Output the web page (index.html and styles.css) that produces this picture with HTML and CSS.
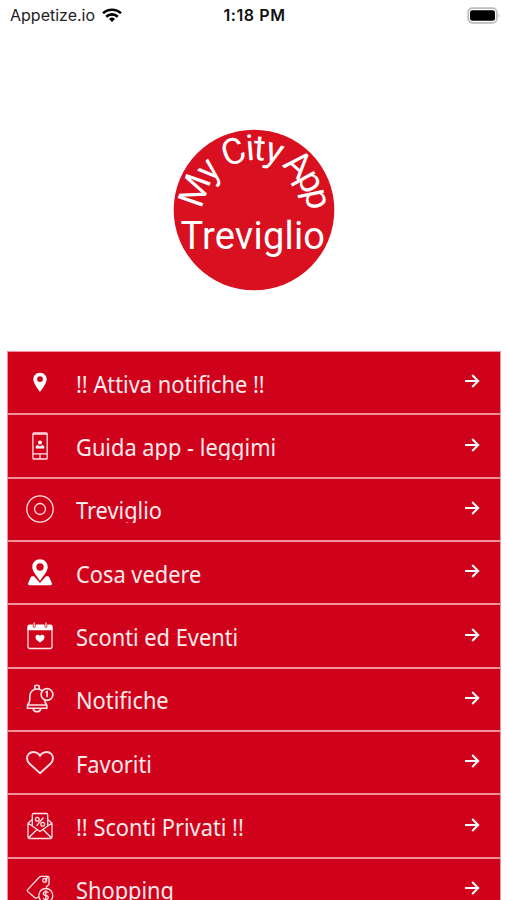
FILE: index.html
```html
<!DOCTYPE html>
<html lang="it">
<head>
    <meta charset="UTF-8">
    <meta name="viewport" content="width=device-width, initial-scale=1.0">
    <title>My City App Treviglio</title>
    <link rel="stylesheet" href="styles.css">
</head>
<body>
    <header class="status-bar">
        <div class="carrier">
            <span>Appetize.io</span>
            <svg width="20" height="15" viewBox="0 0 20 15" fill="none" stroke="#000" stroke-width="2.6">
                <path d="M1 5.3a13 13 0 0 1 18 0"/>
                <path d="M4.2 8.7a8.3 8.3 0 0 1 11.6 0"/>
                <path d="M7 11a4.3 4.3 0 0 1 6 0L10 14z" fill="#000" stroke="none"/>
            </svg>
        </div>
        <div class="time">1:18 PM</div>
        <svg class="battery" width="34" height="17" viewBox="0 0 34 17">
            <rect x="1.2" y="1.2" width="28.6" height="14.6" rx="4.2" fill="#fff" stroke="#bcbcbc" stroke-width="1.7"/>
            <rect x="3" y="3.2" width="25" height="10.6" rx="2.4"/>
            <path d="M31.6 6.4q1.8 2.1 0 4.2z" fill="#aaa"/>
        </svg>
    </header>

    <div class="logo">
        <svg width="162" height="162" viewBox="0 0 162 162">
            <defs>
                <path id="arc" d="M33.500 100.600A52 52 0 1 1 131.300 100.600"/>
            </defs>
            <circle cx="81" cy="81" r="80.3" fill="#d81020"/>
            <text class="logo-arc" x="20 47.3 62 69.3 90.6 97.2 107 123 125.8 144.7 160"><textPath href="#arc">My City App</textPath></text>
            <text class="logo-text" x="7.5" y="120" textLength="144.5">Treviglio</text>
        </svg>
    </div>

    <nav class="menu">
        <a class="row">
            <svg class="icon" viewBox="0 0 32 32">
                <path class="solid" fill-rule="evenodd" d="M16 6.700c-3.700 0-6.700 2.900-6.700 6.500 0 4.500 6.700 12.500 6.700 12.500s6.700-8 6.700-12.500c0-3.600-3-6.500-6.700-6.500zm0 3.500a2.900 2.900 0 1 1 0 5.800 2.900 2.900 0 0 1 0-5.800z"/>
            </svg>
            <span class="label">!! Attiva notifiche !!</span>
        </a>
        <a class="row">
            <svg class="icon" viewBox="0 0 32 32">
                <rect x="8.900" y="3" width="14.300" height="26" rx="1"/>
                <path d="M9 4.200h14M9 23.800h14M16 24v5" />
                <circle class="solid" cx="16" cy="12.500" r="2"/>
                <path class="solid" d="M11.700 18.600v-1.500q0-1.700 2.200-2l2.100 1.400 2.100-1.400q2.200.3 2.200 2v1.500z"/>
            </svg>
            <span class="label">Guida app - leggimi</span>
        </a>
        <a class="row">
            <svg class="icon" viewBox="0 0 32 32">
                <circle cx="16" cy="16" r="13.200"/>
                <circle cx="16" cy="16" r="5.500"/>
            </svg>
            <span class="label">Treviglio</span>
        </a>
        <a class="row">
            <svg class="icon" viewBox="0 0 32 32">
                <path class="solid" fill-rule="evenodd" d="M16 3.300c-4.400 0-7.700 3.300-7.700 7.600 0 4.500 4.200 8.300 7.700 14 3.500-5.700 7.700-9.500 7.700-14 0-4.300-3.300-7.600-7.700-7.600zm0 4a3.700 3.700 0 1 1 0 7.400 3.700 3.700 0 0 1 0-7.400z"/>
                <path class="solid" d="M10 20.200H8.200q-1 0-1.500 1L4.300 26.800q-.7 2.500 1.300 2.500h20.800q2 0 1.300-2.500L25.300 21.200q-.5-1-1.500-1H22L16 27z"/>
            </svg>
            <span class="label">Cosa vedere</span>
        </a>
        <a class="row">
            <svg class="icon" viewBox="0 0 32 32">
                <path d="M4 8v18.500q0 2 2 2h20q2 0 2-2V8"/>
                <path class="solid" d="M3.400 10.300V6.500q0-2 2-2h3.400v2.200q1.400 2.300 2.800 0V4.500h8.900v2.200q1.400 2.300 2.800 0V4.500h3.300q2 0 2 2v3.800z"/>
                <path d="M10.200 2.500v4.500M21.900 2.500v4.500"/>
                <path class="solid" d="M16 22.400c-3.200-2.100-4.500-3.600-4.500-5.200 0-2.800 3.500-3.100 4.500-1 1-2.100 4.500-1.800 4.500 1 0 1.600-1.300 3.100-4.500 5.200z"/>
            </svg>
            <span class="label">Sconti ed Eventi</span>
        </a>
        <a class="row">
            <svg class="icon" viewBox="0 0 32 32">
                <path stroke-width="1.600" d="M18.200 7.800Q16.500 6 13 6 6.500 6.500 5.800 13v3.500Q5.700 19.500 3.500 22v3.200h19.300V22Q21 20 20.500 17.200M3.500 22h19.300M10.800 6.200V3.500q0-1.300 2.200-1.300t2.200 1.300v2.700M9 25.500q1 3.300 4 3.300t4-3.300"/>
                <circle cx="23" cy="11.500" r="5.900" stroke-width="1.600"/>
                <path d="M21.600 9.500l1.500-.9v5.600" stroke-width="1.600"/>
            </svg>
            <span class="label">Notifiche</span>
        </a>
        <a class="row">
            <svg class="icon" viewBox="0 0 32 32">
                <path stroke-width="1.800" d="M16 27.200L5.300 17.500C2.500 14.800 2.300 10.500 4.800 7.900c3-3 8.600-2.400 11.200 2 2.600-4.400 8.200-5 11.200-2 2.500 2.600 2.300 6.900-.5 9.600z"/>
            </svg>
            <span class="label">Favoriti</span>
        </a>
        <a class="row">
            <svg class="icon" viewBox="0 0 32 32">
                <path d="M8.300 17V5q0-1.500 1.500-1.500h12.400q1.500 0 1.500 1.500v12M8.300 9.500L4 13v13.500q0 2 2 2h20q2 0 2-2V13l-4.300-3.500M4 13l12 8.500L28 13M4.700 27.800L13 19.500M27.300 27.800L19 19.500"/>
                <path d="M12.500 15.800L19.500 7.500"/>
                <circle cx="13.300" cy="9.300" r="1.900"/>
                <circle cx="18.700" cy="14.300" r="1.900"/>
            </svg>
            <span class="label">!! Sconti Privati !!</span>
        </a>
        <a class="row">
            <svg class="icon" viewBox="0 0 32 32">
                <path d="M14.500 24.200l-2.500.8q-1 0-1.700-.8l-6.600-5.800q-.8-.9 0-1.800L15.500 4q.7-.7 1.700-.7h6.600q1.200.1 1.200 1.300v6.700l-3 3.200"/>
                <circle cx="20.700" cy="7.200" r="1.900"/>
                <path d="M21 7q2.500-.5 2.200-3.500"/>
                <circle cx="21.800" cy="22.500" r="7"/>
                <path d="M24.300 20.200q-.4-1.500-2.500-1.500t-2.500 1.800q0 1.600 2.500 2t2.500 2.200q-.4 1.800-2.500 1.800t-2.500-1.700M21.800 17.300v10.500"/>
            </svg>
            <span class="label">Shopping</span>
        </a>
    </nav>

    <script>
        // Add the arrow at the end of each menu row
        document.querySelectorAll('.row').forEach(row => {
            row.insertAdjacentHTML('beforeend',
                '<svg class="arrow" width="16" height="16" viewBox="0 0 16 16"><path d="M1 8h13M8.200 2l6 6-6 6"/></svg>');
        });
    </script>
</body>
</html>
```
FILE: styles.css
```css
body {
    margin: 0;
    height: 900px;
    overflow: hidden;
    background-color: #fff;
    font-family: 'Noto Sans', sans-serif;
}

.status-bar {
    display: grid;
    grid-template-columns: 1fr auto 1fr;
    align-items: center;
    height: 30px;
    padding: 0 8px 0 10px;
    font-family: 'Inter', sans-serif;
    font-size: 16px;
    color: #222;
}

.carrier {
    display: flex;
    align-items: center;
    gap: 7px;
}

.time {
    font-weight: 600;
    letter-spacing: 0.6px;
    color: #111;
}

.battery {
    justify-self: end;
    margin-right: -2px;
}

.logo {
    display: flex;
    justify-content: center;
    padding: 99px 0 60px;
}

.logo svg {
    margin-left: 1px;
}

.logo-text,
.logo-arc {
    font-family: 'Roboto', sans-serif;
    font-size: 38px;
    fill: #fff;
}

.logo-arc {
    font-size: 36px;
}

.menu {
    margin: 0 6px 0 7px;
    border-top: 1px solid #f3909a;
}

.row {
    display: flex;
    align-items: center;
    box-sizing: border-box;
    height: 63.35px;
    padding: 0 20px 0 16px;
    background-color: #d0021b;
    border: 1px solid #f3909a;
    border-top: none;
    border-bottom-width: 2px;
    color: #fff;
}

.icon {
    width: 32px;
    height: 32px;
    flex: none;
    margin-bottom: 1px;
    fill: none;
    stroke: #ffe3e6;
    stroke-width: 1.3;
}

.icon .solid {
    fill: #fff;
    stroke: none;
}

.label {
    flex: 1;
    height: 29px;
    margin: 0 0 1px 20px;
    overflow: hidden;
    line-height: 34px;
    font-size: 22.8px;
    color: #ffeaec;
    white-space: nowrap;
    transform: scaleX(0.957);
    transform-origin: left;
}

.arrow {
    margin-bottom: 3px;
    fill: none;
    stroke: #fff;
    stroke-width: 2;
}
```
